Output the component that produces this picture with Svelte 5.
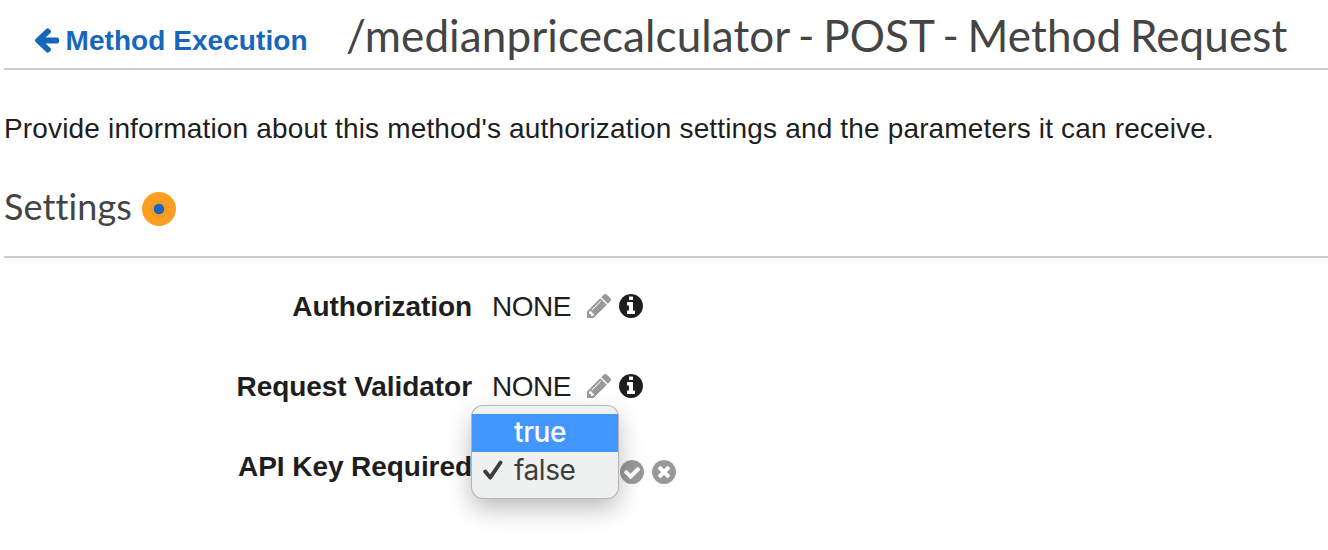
<script>
  const settings = [
    { label: 'Authorization', value: 'NONE' },
    { label: 'Request Validator', value: 'NONE' },
  ];

  const disc = 'M1664 896q0 209-103 385.500t-279.500 279.500-385.500 103-385.500-103-279.500-279.500-103-385.500 103-385.500 279.500-279.500 385.500-103 385.500 103 279.500 279.500 103 385.500z';
  const icons = {
    info: 'M1152 1376v-160q0-14-9-23t-23-9h-96v-512q0-14-9-23t-23-9h-320q-14 0-23 9t-9 23v160q0 14 9 23t23 9h96v320h-96q-14 0-23 9t-9 23v160q0 14 9 23t23 9h448q14 0 23-9t9-23zM1024 480v-160q0-14-9-23t-23-9h-192q-14 0-23 9t-9 23v160q0 14 9 23t23 9h192q14 0 23-9t9-23z',
    check: 'M1412 734q0-28-18-46l-91-90q-19-19-45-19t-45 19l-408 407-226-226q-19-19-45-19t-45 19l-91 90q-18 18-18 46 0 27 18 45l362 362q19 19 45 19 27 0 46-19l543-543q18-18 18-45z',
    times: 'M1277 1122q0-26-19-45l-181-181 181-181q19-19 19-45 0-27-19-46l-90-90q-19-19-46-19-26 0-45 19l-181 181-181-181q-19-19-45-19-27 0-46 19l-90 90q-19 19-19 46 0 26 19 45l181 181-181 181q-19 19-19 45 0 27 19 46l90 90q19 19 46 19 26 0 45-19l181-181 181 181q19 19 45 19 27 0 46-19l90-90q19-19 19-46z',
  };
</script>

{#snippet round(name)}
  <svg class="round" width="24" height="24" viewBox="128 128 1536 1536"><path d={disc} fill="currentColor" /><path d={icons[name]} fill="#fff" /></svg>
{/snippet}

<main>
  <header>
    <a href="#back">
      <svg class="arrow" width="24" height="25" viewBox="64 160 1472 1600" preserveAspectRatio="none"><path fill="currentColor" d="M1536 896v128q0 53-32.500 90.500t-84.500 37.500h-704l293 294q38 36 38 90t-38 90l-75 76q-37 37-90 37-52 0-91-37l-651-652q-37-37-37-90 0-52 37-91l651-650q38-38 91-38 52 0 90 38l75 74q38 38 38 91t-38 91l-293 293h704q52 0 84.500 37.500t32.500 90.500z" /></svg>
      <span>Method Execution</span>
    </a>
    <h1>/medianpricecalculator - POST - Method Request</h1>
  </header>

  <p class="intro">Provide information about this method's authorization settings and the parameters it can receive.</p>

  <h2><span>Settings</span><i class="beacon"></i></h2>

  <section>
    {#each settings as { label, value }}
      <div class="row">
        <b>{label}</b>
        <span class="value">{value}</span>
        <svg class="pencil" width="24" height="24" viewBox="128 149 1515 1515"><path fill="#999" d="M491 1536l91-91-235-235-91 91v107h128v128h107zm523-928q0-22-22-22-10 0-17 7l-542 542q-7 7-7 17 0 22 22 22 10 0 17-7l542-542q7-7 7-17zm-54-192l416 416-832 832h-416v-416zm683 96q0 53-37 90l-166 166-416-416 166-165q36-38 90-38 53 0 91 38l235 234q37 39 37 91z" /></svg>
        <span class="info">{@render round('info')}</span>
      </div>
    {/each}
    <div class="row">
      <b>API Key Required</b>
      <div class="picker">
        <div class="menu">
          <div class="option selected"><i></i><span>true</span></div>
          <div class="option">
            <i><svg width="20" height="20" viewBox="0 0 20 20"><path d="m2.200 11.600 5 6L17.500 2.500" fill="none" stroke="#3d3d3d" stroke-width="3.900" stroke-linecap="round" stroke-linejoin="round" /></svg></i>
            <span>false</span>
          </div>
        </div>
      </div>
      <div class="actions">
        {@render round('check')}
        {@render round('times')}
      </div>
    </div>
  </section>
</main>

<style>
  :global(body) { background: #fff; }
  main {
    box-sizing: border-box;
    height: 550px;
    padding-left: 4px;
    overflow: hidden;
    font: 28px/32px "Liberation Sans", Arial, sans-serif;
    color: #1e1e1e;
    white-space: nowrap;
  }
  header { display: flex; height: 68px; border-bottom: 2px solid #ccc; }
  a { display: flex; gap: 7px; width: 312px; padding: 25px 0 0 30.500px; box-sizing: border-box; color: #1766bd; font-weight: 700; letter-spacing: .06px; text-decoration: none; }
  .arrow { margin-top: 3px; }
  h1, h2 { margin: 0; font-family: Lato, sans-serif; font-weight: 400; color: #444; font-variant-ligatures: none; }
  h1 { padding: 9px 0 0 30px; font-size: 44px; line-height: 52px; letter-spacing: .1px; word-spacing: -2.700px; }
  .intro { margin: 43px 0 0; letter-spacing: .16px; }
  h2 { display: flex; align-items: center; gap: 10px; height: 101px; margin-top: 12px; box-sizing: border-box; padding-bottom: 2px; border-bottom: 2px solid #ccc; font-size: 36px; line-height: 44px; letter-spacing: .1px; }
  .beacon { width: 34px; height: 34px; margin-top: 6px; border-radius: 50%; background: radial-gradient(circle, #1766bd 4.800px, #f39a26 5.600px 8.600px, #ff9f22 9.400px); }
  section { padding-top: 33px; }
  .row { display: flex; height: 80px; align-items: flex-start; }
  b { width: 468px; text-align: right; letter-spacing: -.06px; }
  .value { width: 94px; padding-left: 20px; box-sizing: border-box; letter-spacing: -.5px; }
  .pencil { margin: 3px 8px 0 20.500px; }
  .round { display: block; }
  .info { margin-top: 3px; }
  .picker { position: relative; width: 148px; height: 32px; }
  .menu {
    position: absolute;
    top: -45px;
    left: 0;
    width: 146px;
    height: 92px;
    padding: 8px 0;
    box-sizing: border-box;
    border-radius: 11px;
    background: #eff0f0;
    box-shadow: 0 0 0 1px #b4b4b4, 0 10px 24px rgba(0, 0, 0, .28);
    font-family: Inter, sans-serif;
    letter-spacing: -.4px;
    color: #3d3d3d;
  }
  .option { display: flex; align-items: center; height: 38px; padding-bottom: 2px; box-sizing: border-box; }
  .option i { display: flex; width: 31px; padding-left: 11px; }
  .selected { background: #4296ff; color: #fff; font-weight: 500; }
  .actions { display: flex; gap: 8px; margin-top: 9px; color: #999; }
</style>
